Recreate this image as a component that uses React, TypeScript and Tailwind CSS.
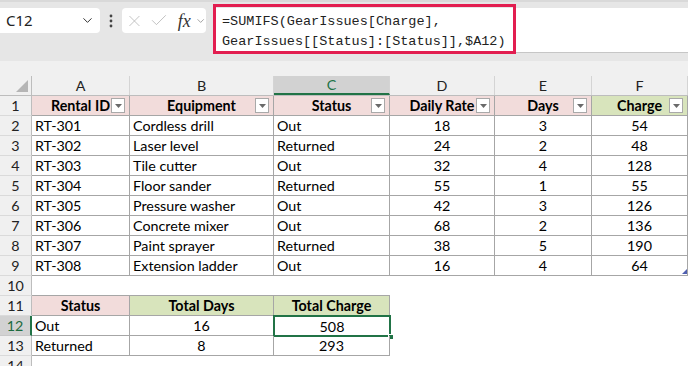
import { ChevronDown, X, Check } from 'lucide-react'

const colW = ['w-[98px]', 'w-[144px]', 'w-[116px]', 'w-[105px]', 'w-[97px]', 'w-[96px]']
const letters = ['A', 'B', 'C', 'D', 'E', 'F']

type Row = [string, string, string, number, number, number]

const rentals: Row[] = [
  ['RT-301', 'Cordless drill', 'Out', 18, 3, 54],
  ['RT-302', 'Laser level', 'Returned', 24, 2, 48],
  ['RT-303', 'Tile cutter', 'Out', 32, 4, 128],
  ['RT-304', 'Floor sander', 'Returned', 55, 1, 55],
  ['RT-305', 'Pressure washer', 'Out', 42, 3, 126],
  ['RT-306', 'Concrete mixer', 'Out', 68, 2, 136],
  ['RT-307', 'Paint sprayer', 'Returned', 38, 5, 190],
  ['RT-308', 'Extension ladder', 'Out', 16, 4, 64],
]

const headers = ['Rental ID', 'Equipment', 'Status', 'Daily Rate', 'Days', 'Charge']

function FilterButton() {
  return (
    <div className="absolute right-[4px] top-[2px] flex h-[15px] w-[14px] items-center justify-center border border-[#a9a9a9] bg-white">
      <svg width="7" height="4" viewBox="0 0 7 4">
        <polygon points="0,0 7,0 3.5,4" fill="#6a6a6a" />
      </svg>
    </div>
  )
}

function RowHead({ n, selected }: { n: number; selected?: boolean }) {
  return (
    <div
      className={
        selected
          ? 'flex h-[20px] w-[32px] shrink-0 items-center justify-center border-b border-r-2 border-b-[#c8c8c8] border-r-[#217346] bg-[#d2d2d2] text-[#1d6b3f]'
          : 'flex h-[20px] w-[32px] shrink-0 items-center justify-center border-b border-r border-b-[#dadada] border-r-[#bdbdbd] bg-[#f0f0f0] text-[#222]'
      }
    >
      {n}
    </div>
  )
}

function Cell({
  col,
  children,
  align = 'left',
  border,
  head,
  fill,
  filter,
}: {
  col: number
  children?: React.ReactNode
  align?: 'left' | 'center'
  border?: boolean
  head?: boolean
  fill?: string
  filter?: boolean
}) {
  return (
    <div
      className={[
        'relative flex h-[20px] shrink-0 items-center overflow-hidden whitespace-nowrap leading-[19px]',
        colW[col],
        border ? 'border-b border-r border-[#a6a6a6]' : '',
        align === 'center' ? 'justify-center' : 'pl-[3px]',
        head ? 'font-bold' : '',
        fill ?? '',
      ].join(' ')}
    >
      {children}
      {filter && <FilterButton />}
    </div>
  )
}

export default function App() {
  return (
    <div className="relative h-[366px] w-[688px] overflow-hidden bg-white font-['Lato',sans-serif] text-[14.3px] text-black">
      {/* Formula bar */}
      <div className="h-[61px] border-t-2 border-[#d9d9d9] bg-[#e6e6e6]">
        <div className="flex items-start pt-[6px]">
          <div className="flex h-[25px] w-[100px] items-center justify-between rounded-r-[4px] bg-white pl-[6px] pr-[5px] font-['Noto_Sans',sans-serif] text-[15px] text-[#222]">
            <span>C12</span>
            <ChevronDown size={15} strokeWidth={1.6} className="text-[#333]" />
          </div>
          <div className="flex h-[25px] w-[22px] items-center justify-center">
            <svg width="4" height="14" viewBox="0 0 4 14">
              <circle cx="2" cy="2" r="1.4" fill="#444" />
              <circle cx="2" cy="7" r="1.4" fill="#444" />
              <circle cx="2" cy="12" r="1.4" fill="#444" />
            </svg>
          </div>
          <div className="flex h-[25px] w-[84px] items-center rounded-[4px] bg-white pl-[3px]">
            <X size={20} strokeWidth={1} className="text-[#b4b4b4]" />
            <Check size={21} strokeWidth={1} className="ml-[5px] text-[#b4b4b4]" />
            <span className="ml-[9px] font-['Liberation_Serif',serif] text-[18px] italic leading-none text-[#333]">fx</span>
            <ChevronDown size={12} strokeWidth={1.4} className="ml-[4px] text-[#777]" />
          </div>
          <div className="relative ml-[7px] mt-[0px] h-[45px] flex-1 border-b border-[#c6c6c6] bg-white">
            <div className="absolute left-0 top-[-4px] h-[50px] w-[303px] border-[3px] border-[#e21e50] pl-[6px] pt-[5px] font-['Liberation_Mono',monospace] text-[13.5px] leading-[20px] text-[#222]">
              <div>=SUMIFS(GearIssues[Charge],</div>
              <div>GearIssues[[Status]:[Status]],$A12)</div>
            </div>
          </div>
        </div>
      </div>

      {/* Column header band */}
      <div className="h-[15px] bg-[#f0f0f0]" />
      <div className="flex h-[20px] border-b border-[#bdbdbd] bg-[#f0f0f0] text-[#222]">
        <div className="relative h-full w-[32px] shrink-0 border-r border-[#bdbdbd]">
          <svg className="absolute left-[16px] top-[4px]" width="12" height="12" viewBox="0 0 12 12">
            <polygon points="12,0 12,12 0,12" fill="#b5b5b5" />
          </svg>
        </div>
        {letters.map((l, i) => (
          <div
            key={l}
            className={
              i === 2
                ? 'flex h-full w-[116px] shrink-0 items-center justify-center border-r border-b-2 border-r-[#d4d4d4] border-b-[#217346] bg-[#d2d2d2] text-[#217346]'
                : `flex h-full shrink-0 items-center justify-center border-r border-[#d4d4d4] ${colW[i]}`
            }
          >
            {l}
          </div>
        ))}
      </div>

      {/* Row 1: table header */}
      <div className="flex">
        <RowHead n={1} />
        {headers.map((h, i) => (
          <Cell key={h} col={i} align="center" border head filter fill={i === 5 ? 'bg-[#d8e4bc]' : 'bg-[#f2dcdb]'}>
            {h}
          </Cell>
        ))}
      </div>

      {/* Data rows */}
      {rentals.map((r, ri) => (
        <div key={r[0]} className="flex">
          <RowHead n={ri + 2} />
          <Cell col={0} border>{r[0]}</Cell>
          <Cell col={1} border>{r[1]}</Cell>
          <Cell col={2} border>{r[2]}</Cell>
          <Cell col={3} border align="center">{r[3]}</Cell>
          <Cell col={4} border align="center">{r[4]}</Cell>
          <Cell col={5} border align="center">
            {r[5]}
            {ri === rentals.length - 1 && (
              <svg className="absolute bottom-[1px] right-0" width="5" height="5" viewBox="0 0 5 5">
                <polygon points="5,0 5,5 0,5" fill="#4f5fb0" />
              </svg>
            )}
          </Cell>
        </div>
      ))}

      {/* Row 10 */}
      <div className="flex">
        <RowHead n={10} />
        <div className="h-[20px] w-[98px] shrink-0 border-b border-[#a6a6a6]" />
        <div className="h-[20px] w-[144px] shrink-0 border-b border-[#a6a6a6]" />
        <div className="h-[20px] w-[116px] shrink-0 border-b border-[#a6a6a6]" />
      </div>

      {/* Summary */}
      <div className="flex">
        <RowHead n={11} />
        <Cell col={0} align="center" border head fill="bg-[#f2dcdb]">Status</Cell>
        <Cell col={1} align="center" border head fill="bg-[#d8e4bc]">Total Days</Cell>
        <Cell col={2} align="center" border head fill="bg-[#d8e4bc]">Total Charge</Cell>
      </div>
      <div className="flex">
        <RowHead n={12} selected />
        <Cell col={0} border>Out</Cell>
        <Cell col={1} border align="center">16</Cell>
        <div className="relative h-[20px] w-[116px] shrink-0">
          <div className="absolute left-[-1px] top-[-1px] flex h-[22px] w-[118px] items-center justify-center border-2 border-[#217346] leading-[19px]">
            508
          </div>
          <div className="absolute bottom-[-4px] right-[-4px] h-[6px] w-[6px] border border-white bg-[#217346]" />
        </div>
      </div>
      <div className="flex">
        <RowHead n={13} />
        <Cell col={0} border>Returned</Cell>
        <Cell col={1} border align="center">8</Cell>
        <Cell col={2} border align="center">293</Cell>
      </div>
      <div className="flex">
        <RowHead n={14} />
      </div>
    </div>
  )
}
